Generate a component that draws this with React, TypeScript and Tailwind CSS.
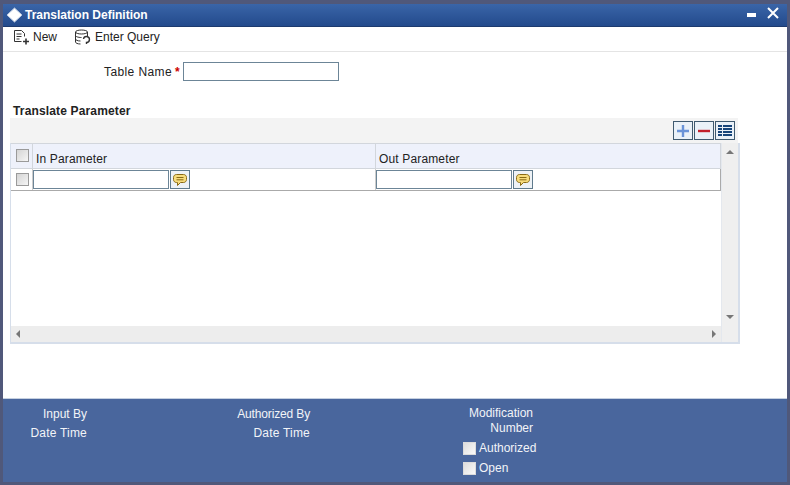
import { ReactNode } from "react";

function ChatButton() {
  return (
    <button className="flex h-[19px] w-[20px] items-center justify-center border border-[#5f7a8c] bg-[#eef2f6]">
      <svg width="16" height="14" viewBox="0 0 16 14">
        <path
          d="M4.500 1.500h7c1.700 0 3 1.200 3 3v2c0 1.800-1.300 3-3 3H8.500l-3 3v-3h-1c-1.700 0-3-1.200-3-3v-2c0-1.800 1.300-3 3-3z"
          fill="#f7dc7c"
          stroke="#8a6a14"
        />
        <path d="M4.500 4.500h7M4.500 6.800h7" stroke="#8a6a14" />
      </svg>
    </button>
  );
}

function Check({ className }: { className?: string }) {
  return (
    <span
      className={`block h-[13px] w-[13px] shrink-0 border border-[#9a9a9a] bg-gradient-to-br from-[#d4d4d4] to-[#f6f6f6] ${className ?? ""}`}
    />
  );
}

function ToolButton({ children }: { children: ReactNode }) {
  return (
    <button className="flex h-[19px] w-[20px] items-center justify-center border border-[#3f5a70] bg-[#eaf1f8]">
      {children}
    </button>
  );
}

function Param() {
  return (
    <div className="flex items-center gap-px">
      <input className="h-[19px] w-[136px] border border-[#6c8597] bg-white" />
      <ChatButton />
    </div>
  );
}

export default function App() {
  return (
    <div className="flex h-[485px] w-[790px] flex-col overflow-hidden bg-[#50587a] pt-[4px] pb-[3px] pl-[3px] pr-[3px] font-['Liberation_Sans',sans-serif] text-[12px] text-[#222]">
      {/* title bar */}
      <div className="flex h-[23px] shrink-0 items-center justify-between border-b border-[#1d3a6e] bg-gradient-to-b from-[#3a65a8] to-[#234a8c] pr-[8px]">
        <div className="flex items-center gap-[2px] pl-[3px]">
          <svg width="17" height="16" viewBox="0 0 17 16">
            <path d="M8.500 1 16 8l-7.500 7L1 8z" fill="#fff" stroke="#b8c8e0" />
          </svg>
          <span className="font-bold text-white">Translation Definition</span>
        </div>
        <div className="flex items-start gap-[11px]">
          <span className="mt-[6px] block h-[4px] w-[9px] bg-white" />
          <svg width="12" height="12" viewBox="0 0 12 12" className="mb-[5px]">
            <path d="M1 1l10 10M11 1 1 11" stroke="#fff" strokeWidth="2" />
          </svg>
        </div>
      </div>

      <div className="flex min-h-0 flex-1 flex-col bg-white">
        {/* toolbar */}
        <div className="flex h-[25px] shrink-0 items-center border-b border-[#e4e4e4] pb-[4px] pl-[10px]">
          <div className="flex items-center gap-[3px]">
            <svg width="17" height="16" viewBox="0 0 17 16" fill="none" stroke="#333">
              <path d="M1.500 1.500h7l3 3v3M1.500 1.500v11h7M3.500 5h5M3.500 7.500h5M3.500 10h3" />
              <path d="M10 12.500h6M13 9.500v6" strokeWidth="1.600" />
            </svg>
            <span>New</span>
          </div>
          <div className="ml-[17px] flex items-center gap-[4px]">
            <svg width="17" height="16" viewBox="0 0 17 16" fill="none" stroke="#333">
              <ellipse cx="7.500" cy="3" rx="6" ry="2" />
              <path d="M1.500 3v10c0 1 2 2 5 2M13.500 3v4M1.500 6.500c0 1 2.500 2 6 2M1.500 10c0 1 2 2 5 2" />
              <path d="M9.500 10a3 3 0 1 1 3 3.500V15" strokeWidth="1.400" />
            </svg>
            <span>Enter Query</span>
          </div>
        </div>

        {/* table name */}
        <div className="mt-[10px] flex h-[19px] shrink-0 items-center">
          <span className="ml-[101px] tracking-[0.4px]">Table Name</span>
          <span className="ml-[3px] font-bold text-[#c00]">*</span>
          <input className="ml-[3px] h-[19px] w-[156px] border border-[#6c8597] bg-white" />
        </div>

        {/* grid */}
        <div className="mt-[23px] ml-[10px] h-[14px] shrink-0 font-bold leading-[14px] tracking-[0.15px]">Translate Parameter</div>
        <div className="ml-[7px] flex h-[25px] w-[728px] shrink-0 items-center justify-end gap-px bg-[#f3f3f3] pr-[3px]">
          <ToolButton>
            <svg width="14" height="14" viewBox="0 0 14 14">
              <path d="M7 1v12M1 7h12" stroke="#6a93d8" strokeWidth="2.400" />
            </svg>
          </ToolButton>
          <ToolButton>
            <svg width="14" height="14" viewBox="0 0 14 14">
              <path d="M1 7h12" stroke="#c2202c" strokeWidth="2.400" />
            </svg>
          </ToolButton>
          <ToolButton>
            <svg width="16" height="14" viewBox="0 0 16 14">
              <path d="M1 2h14M1 5h14M1 8h14M1 11h14" stroke="#17457a" strokeWidth="2" />
              <path d="M5.500 1v11" stroke="#eaf1f8" />
            </svg>
          </ToolButton>
        </div>
        <div className="ml-[7px] flex h-[201px] w-[730px] shrink-0 border-2 border-t-0 border-[#d6deea] border-l-[1px]">
          <div className="flex min-w-0 flex-1 flex-col">
            <div className="min-h-0 flex-1 bg-white">
              <div className="flex h-[26px] border-y border-[#d2d6dc] bg-[#eef1fb] tracking-[0.15px]">
                <div className="flex w-[22px] items-center justify-center border-r border-[#d2d6dc] pl-px">
                  <Check className="mb-[2px]" />
                </div>
                <div className="flex w-[343px] items-end border-r border-[#d2d6dc] pl-[3px]">In Parameter</div>
                <div className="flex flex-1 items-end border-r border-[#d2d6dc] pl-[3px]">Out Parameter</div>
              </div>
              <div className="flex h-[22px] border-b border-[#aaa]">
                <div className="flex w-[22px] items-center justify-center border-r border-[#ccc] pl-px">
                  <Check />
                </div>
                <div className="flex w-[343px] items-center border-r border-[#ccc]">
                  <Param />
                </div>
                <div className="flex flex-1 items-center border-r border-[#aaa]">
                  <Param />
                </div>
              </div>
            </div>
            <div className="flex h-[16px] shrink-0 items-center justify-between bg-[#ededed] px-[5px]">
              <span className="h-0 w-0 border-y-[4px] border-r-[4px] border-y-transparent border-r-[#777]" />
              <span className="h-0 w-0 border-y-[4px] border-l-[4px] border-y-transparent border-l-[#777]" />
            </div>
          </div>
          <div className="flex w-[17px] shrink-0 flex-col items-center border-l border-[#e4e8ee] bg-[#efefef] pt-[7px]">
            <span className="h-0 w-0 border-x-[4px] border-b-[4px] border-x-transparent border-b-[#777]" />
            <span className="mt-[161px] h-0 w-0 border-x-[4px] border-t-[4px] border-x-transparent border-t-[#777]" />
          </div>
        </div>

        {/* footer */}
        <div className="mt-auto flex h-[84px] shrink-0 border-t border-[#c5d0e0] bg-[#49669d] text-[#f2f4f8]">
          <div className="mt-[6px] flex w-[84px] flex-col gap-px text-right">
            <span>Input By</span>
            <span className="tracking-[0.2px]">Date Time</span>
          </div>
          <div className="mt-[6px] flex w-[223px] flex-col gap-px text-right">
            <span className="tracking-[-0.15px]">Authorized By</span>
            <span className="tracking-[0.2px]">Date Time</span>
          </div>
          <div className="mt-[7px] flex w-[223px] flex-col text-right">
            <span className="leading-[15px]">Modification</span>
            <span className="leading-[15px]">Number</span>
            <div className="mt-[5px] flex h-[14px] items-center gap-[3px] pl-[153px] text-left">
              <Check className="!border-[#dcdcdc] !from-[#dddddd] !to-[#fafafa]" />
              <span>Authorized</span>
            </div>
            <div className="mt-[6px] flex h-[14px] items-center gap-[3px] pl-[153px] text-left">
              <Check className="!border-[#dcdcdc] !from-[#dddddd] !to-[#fafafa]" />
              <span>Open</span>
            </div>
          </div>
        </div>
      </div>
    </div>
  );
}
